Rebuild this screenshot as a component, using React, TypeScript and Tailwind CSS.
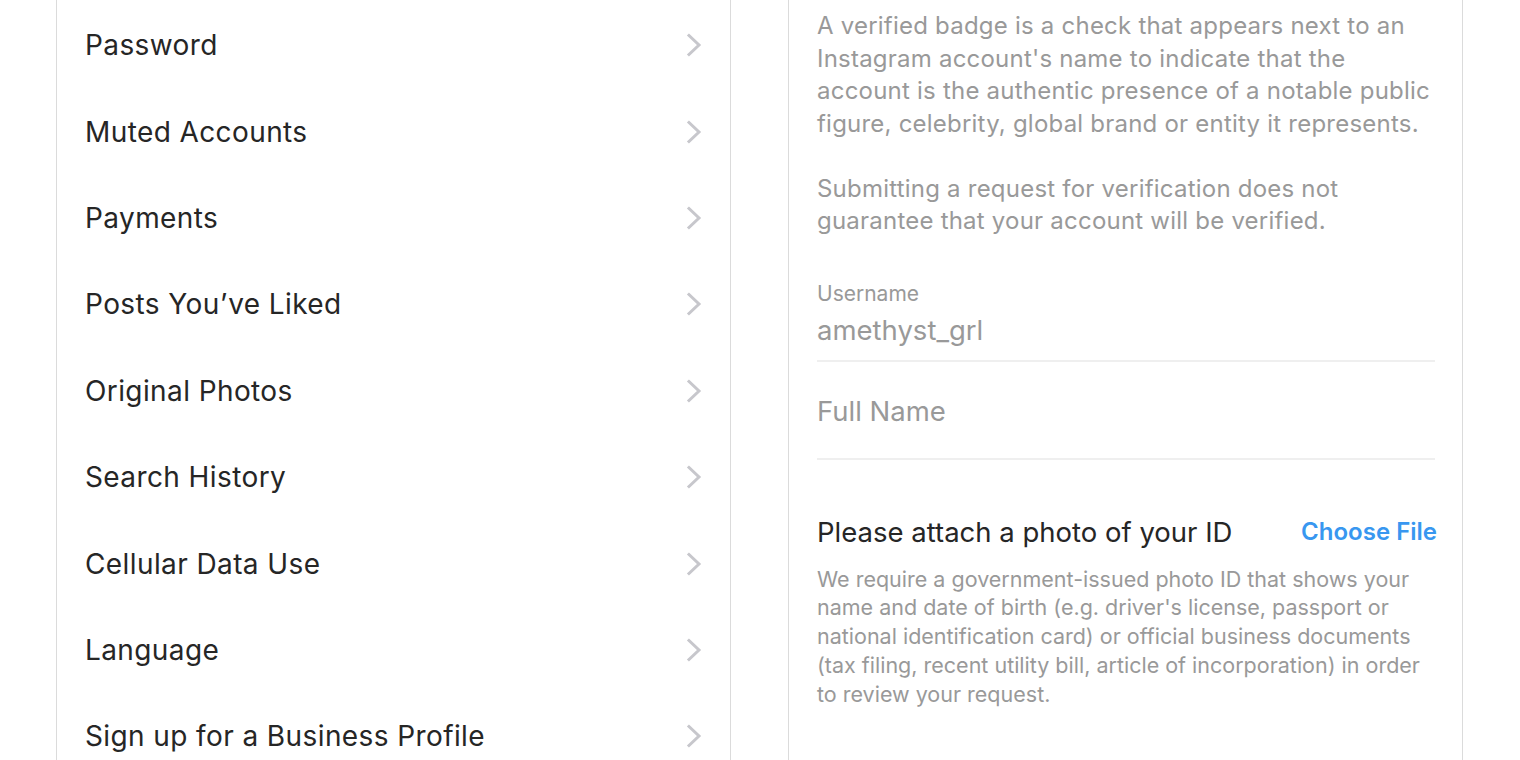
import React from "react";

const items = [
  "Password",
  "Muted Accounts",
  "Payments",
  "Posts You\u2019ve Liked",
  "Original Photos",
  "Search History",
  "Cellular Data Use",
  "Language",
  "Sign up for a Business Profile",
];

function Chevron() {
  return (
    <svg width="16" height="24" viewBox="0 0 16 24" fill="none">
      <path d="M3 2.5L13 12L3 21.5" stroke="#c7c7cc" strokeWidth="3" strokeLinecap="square" strokeLinejoin="miter" />
    </svg>
  );
}

export default function App() {
  return (
    <div
      className="w-[1520px] h-[760px] overflow-hidden bg-white flex"
      style={{ fontFamily: "Inter, 'Noto Sans', sans-serif" }}
    >
      <div className="ml-[56px] w-[675px] h-full border-x border-[#dbdbdb] flex flex-col pt-[2px]">
        {items.map((t) => (
          <div key={t} className="h-[86.4px] shrink-0 flex items-center justify-between pl-[28px] pr-[28px]">
            <span className="text-[28px] text-[#262626] tracking-[0.4px]">{t}</span>
            <Chevron />
          </div>
        ))}
      </div>
      <div className="ml-[57px] w-[675px] h-full border-x border-[#dbdbdb] pl-[28px] pr-[27px] flex flex-col">
        <p className="mt-[10px] text-[24px] leading-[32.5px] text-[#999999] tracking-[0.22px]">
          A verified badge is a check that appears next to an Instagram account's name to indicate that the account is the authentic presence of a notable public figure, celebrity, global brand or entity it represents.
        </p>
        <p className="mt-[32.5px] text-[24px] leading-[32.5px] text-[#999999] tracking-[0.22px]">
          Submitting a request for verification does not guarantee that your account will be verified.
        </p>
        <div className="mt-[44px] text-[21px] leading-[24px] text-[#999999]">Username</div>
        <div className="mt-[0px] text-[27.5px] leading-[48px] text-[#999999] border-b-2 border-[#efefef] pb-[6px]">amethyst_grl</div>
        <div className="pt-[25px] pb-[23px] text-[27.5px] leading-[48px] text-[#999999] border-b-2 border-[#efefef]">Full Name</div>
        <div className="mt-[54px] flex items-center justify-between mr-[-2px]">
          <span className="text-[27.5px] leading-[36px] text-[#262626]">Please attach a photo of your ID</span>
          <span className="text-[24px] leading-[36px] text-[#3897f0] font-semibold">Choose File</span>
        </div>
        <p className="mt-[15px] text-[21.5px] leading-[28.75px] text-[#999999]">
          We require a government-issued photo ID that shows your name and date of birth (e.g. driver's license, passport or national identification card) or official business documents (tax filing, recent utility bill, article of incorporation) in order to review your request.
        </p>
      </div>
    </div>
  );
}
